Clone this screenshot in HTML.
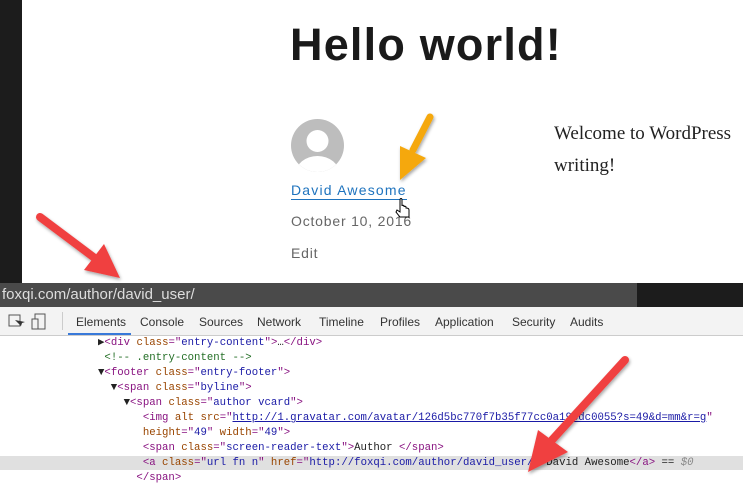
<!DOCTYPE html>
<html><head><style>
body{margin:0;width:743px;height:486px;overflow:hidden;background:#fff;position:relative;font-family:"Liberation Sans",sans-serif}
.a{position:absolute}
.code{font-family:"Liberation Mono",monospace;font-size:11px;white-space:pre;line-height:15px;color:#222;transform:scaleX(0.97);transform-origin:0 0}
.t{color:#881280}.at{color:#994500}.v{color:#1a1aa6}.c{color:#236e25}
.tab{position:absolute;top:315px;font-size:12px;color:#333}
</style></head><body>
<div class="a" style="left:0;top:0;width:22px;height:283px;background:#1c1c1c"></div>
<div class="a" style="left:290px;top:19px;font-size:45px;font-weight:bold;color:#1a1a1a;letter-spacing:1.2px">Hello world!</div>
<div class="a" style="left:554px;top:118px;font-family:'Liberation Serif',serif;font-size:19px;line-height:32px;color:#222;white-space:nowrap">Welcome to WordPress<br>writing!</div>
<svg class="a" style="left:291px;top:119px" width="53" height="53" viewBox="0 0 53 53"><defs><clipPath id="cp"><circle cx="26.5" cy="26.5" r="26.5"/></clipPath></defs><circle cx="26.5" cy="26.5" r="26.5" fill="#bdbdbd"/><g clip-path="url(#cp)" fill="#fff"><circle cx="26.5" cy="22" r="11"/><ellipse cx="26.5" cy="55" rx="22" ry="18"/></g></svg>
<div class="a" style="left:291px;top:182px;font-size:14px;color:#1e73be;letter-spacing:1.2px;border-bottom:1.5px solid #1e73be;padding-bottom:1px">David Awesome</div>
<div class="a" style="left:291px;top:213px;font-size:14px;color:#666;letter-spacing:0.8px">October 10, 2016</div>
<div class="a" style="left:291px;top:245px;font-size:14px;color:#666;letter-spacing:0.8px">Edit</div>
<div class="a" style="left:0;top:283px;width:637px;height:24px;background:#4a4a4a;color:#ddd;font-size:15px;line-height:24px;padding-left:2px">foxqi.com/author/david_user/</div>
<div class="a" style="left:637px;top:283px;width:106px;height:24px;background:#1c1c1c"></div>
<div class="a" style="left:0;top:307px;width:743px;height:28px;background:#f3f3f3;border-bottom:1px solid #ccc"></div>
<svg class="a" style="left:8px;top:313px" width="44" height="18"><rect x="1" y="2" width="11" height="11" fill="none" stroke="#555"/><path d="M7 7l6 6 1-3 3-1z" fill="#333"/><rect x="27" y="1" width="10" height="15" fill="none" stroke="#555"/><rect x="24" y="6" width="6" height="10" fill="#f3f3f3" stroke="#555"/></svg>
<div class="a" style="left:62px;top:312px;width:1px;height:18px;background:#ccc"></div>
<div class="tab" style="left:76px">Elements</div>
<div class="a" style="left:68px;top:333px;width:63px;height:2px;background:#3879d9"></div>
<div class="tab" style="left:140px">Console</div>
<div class="tab" style="left:199px">Sources</div>
<div class="tab" style="left:257px">Network</div>
<div class="tab" style="left:319px">Timeline</div>
<div class="tab" style="left:380px">Profiles</div>
<div class="tab" style="left:435px">Application</div>
<div class="tab" style="left:512px">Security</div>
<div class="tab" style="left:570px">Audits</div>
<div class="a" style="left:0;top:456px;width:743px;height:14px;background:#e0e0e0"></div>
<div class="a code" style="left:98px;top:336px">▶<span class="t">&lt;div </span><span class="at">class</span><span class="t">="</span><span class="v">entry-content</span><span class="t">"&gt;</span>…<span class="t">&lt;/div&gt;</span>
 <span class="c">&lt;!-- .entry-content --&gt;</span>
▼<span class="t">&lt;footer </span><span class="at">class</span><span class="t">="</span><span class="v">entry-footer</span><span class="t">"&gt;</span>
  ▼<span class="t">&lt;span </span><span class="at">class</span><span class="t">="</span><span class="v">byline</span><span class="t">"&gt;</span>
    ▼<span class="t">&lt;span </span><span class="at">class</span><span class="t">="</span><span class="v">author vcard</span><span class="t">"&gt;</span>
       <span class="t">&lt;img </span><span class="at">alt src</span><span class="t">="</span><span class="v" style="text-decoration:underline;color:#1a1aa6">http://1.gravatar.com/avatar/126d5bc770f7b35f77cc0a198dc0055?s=49&amp;d=mm&amp;r=g</span><span class="t">"</span>
       <span class="at">height</span><span class="t">="</span><span class="v">49</span><span class="t">" </span><span class="at">width</span><span class="t">="</span><span class="v">49</span><span class="t">"&gt;</span>
       <span class="t">&lt;span </span><span class="at">class</span><span class="t">="</span><span class="v">screen-reader-text</span><span class="t">"&gt;</span>Author <span class="t">&lt;/span&gt;</span>
       <span class="t">&lt;a </span><span class="at">class</span><span class="t">="</span><span class="v">url fn n</span><span class="t">" </span><span class="at">href</span><span class="t">="</span><span class="v">http://foxqi.com/author/david_user/</span><span class="t">"&gt;</span>David Awesome<span class="t">&lt;/a&gt;</span> == <i style="color:#888">$0</i>
      <span class="t">&lt;/span&gt;</span></div>
<svg class="a" style="left:0;top:0" width="743" height="486">
<defs><filter id="s"><feDropShadow dx="1" dy="2" stdDeviation="1.5" flood-opacity="0.35"/></filter></defs>
<g filter="url(#s)">
<line x1="40" y1="217" x2="100" y2="262" stroke="#f04040" stroke-width="8" stroke-linecap="round"/>
<polygon points="120,278 84,270 104,244" fill="#f04040"/>
<line x1="625" y1="360" x2="552" y2="440" stroke="#f04040" stroke-width="8" stroke-linecap="round"/>
<polygon points="528,472 538,430 568,452" fill="#f04040"/>
<line x1="430" y1="117" x2="413" y2="150" stroke="#f5a80c" stroke-width="7" stroke-linecap="round"/>
<polygon points="400,180 400,146 426,158" fill="#f5a80c"/>
</g>
<path d="M400 200v12l-3-2 -1 2 4 5h9v-7c0-2-2-2-3-2v-1c0-1-2-1-2 0v-1c0-1-2-1-2 0v-6c0-2-2-2-2 0z" fill="#fff" stroke="#000" stroke-width="1"/>
</svg>
</body></html>
